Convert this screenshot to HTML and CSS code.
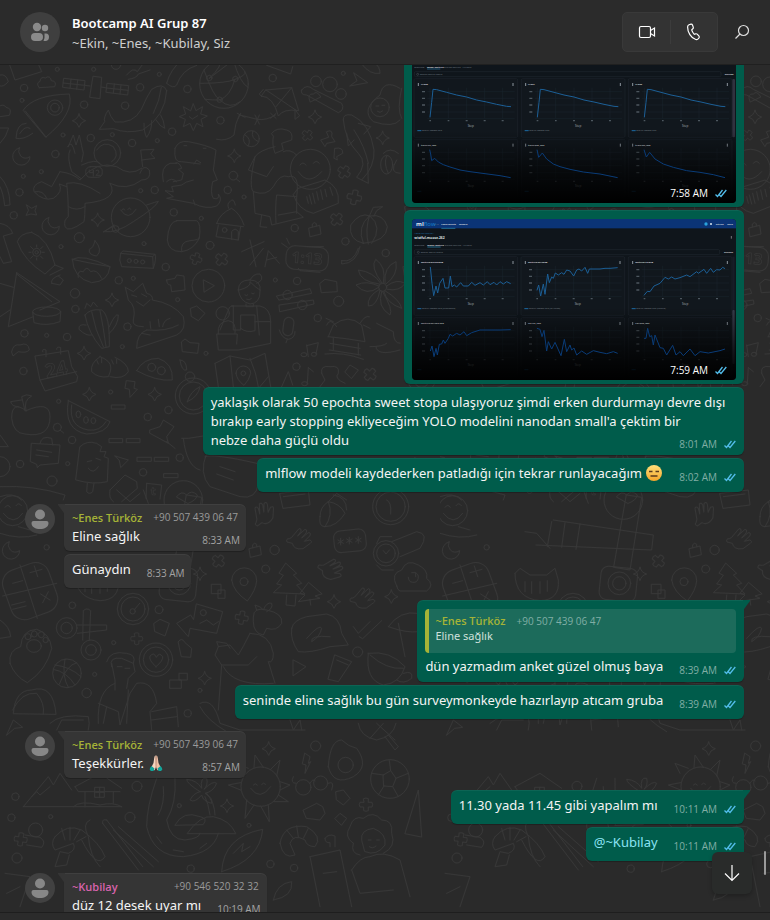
FILE: index.html
```html
<!DOCTYPE html>
<html lang="tr">
<head>
<meta charset="utf-8">
<meta name="viewport" content="width=device-width, initial-scale=1">
<title>Bootcamp AI Grup 87</title>
<link rel="stylesheet" href="styles.css">
</head>
<body>
<svg class="defs" aria-hidden="true">
  <defs>
    <symbol id="ticks" viewBox="0 0 12 9"><path d="M.5 5.5 2.500 7.500 7.500 1M4.500 6 6 7.500 11.300 1" fill="none" stroke="#53bdeb" stroke-width="1.300"/></symbol>
    <symbol id="person" viewBox="0 0 30 30"><circle cx="15" cy="10.500" r="5"/><path d="M8.500 17h13q2 0 2 2c0 4-4 6-8.500 6s-8.500-2-8.500-6q0-2 2-2z"/></symbol>
    <linearGradient id="shade" x1="0" y1="0" x2="0" y2="1"><stop offset=".55" stop-color="#000" stop-opacity="0"/><stop offset=".8" stop-color="#000" stop-opacity=".6"/><stop offset="1" stop-color="#000"/></linearGradient>
    <g id="card">
      <rect x="42" y="155" width="311" height="176" rx="4" fill="#11171d" stroke="#1d242c" stroke-width="2"/>
      <path d="M90 182v92M145 182v92M200 182v92M254 182v92M308 182v92M82 194h262M82 214h262M82 234h262M82 255h262M82 275h262" stroke="#1d2730" stroke-width="1.500"/>
      <path d="M55 168v9M339 168v9" stroke="#8d969e" stroke-width="3"/>
      <path d="M66 194h9M66 214h9M66 234h9M66 255h9M88 281h5M143 281h5M197 281h6M251 281h6M305 281h6" stroke="#4d575f" stroke-width="4"/>
      <text x="203" y="299" font-size="9" fill="#aab2ba">Step</text>
      <path d="M52 311h12" stroke="#1c6ba5" stroke-width="3"/>
    </g>
    <path id="star" d="M0-20Q4-4 20 0Q4 4 0 20Q-4 4-20 0Q-4-4 0-20Z"/>
    <path id="plus" d="M-7-18Q0-22 7-18V-7H18Q22 0 18 7H7V18Q0 22-7 18V7H-18Q-22 0-18-7H-7Z"/>
    <path id="moon" d="M-8-24A26 26 0 1 0 24 2Q8 12-4 0Q-14-12-8-24Z"/>
    <path id="cloud" d="M-22 15Q-34 2-20-4Q-18-20-4-14Q10-24 14-6Q32-4 24 12Q0 14-22 15Z"/>
    <path id="tag" d="M-16-6 16-14 20 12-12 20ZM-6-9V-18Q0-26 6-19V-12"/>
    <path id="hand" d="M-30 0-8-26Q0-28-2-18L-12-4 10-24Q18-24 14-14L0 2 20-14Q30-14 24-4L8 12 24 8Q34 12 26 18L4 34Q-24 38-28 18L-44 14Q-48 4-38 4Z"/>
    <pattern id="doodles" width="1320" height="2760" patternUnits="userSpaceOnUse" patternTransform="scale(.33333) translate(0 -195)">
      <g class="ink">
        <!-- sky and travel -->
        <path d="M28 192 45 240 125 215 112 185M0 225Q18 220 25 245Q10 262 0 258M-6 320Q12 310 18 322Q38 325 28 346L0 350M0 384H26Q20 410 0 430M0 530Q30 560 30 615L14 617Q10 580 0 560"/>
        <use href="#cloud" x="140" y="248"/>
        <path d="M192 235 255 242 252 270 189 262ZM190 249 254 256M213 238 210 265M233 240 230 268M322 250 386 257 383 285 319 277ZM320 264 384 271M343 252 340 279M363 255 360 282M255 256 270 258M304 261 320 264M280 229 305 232 300 296 270 292Z"/>
        <path d="M380 225Q400 200 412 215L430 190M385 238Q410 235 415 222L450 210M500 250Q510 210 545 180M500 250Q520 268 530 255Q545 210 590 196M800 196 872 222 878 200M1085 192Q1110 225 1140 220Q1140 200 1125 190"/>
        <path d="M70 330Q100 285 208 282Q224 340 138 411ZM76 333 138 411M78 370Q50 370 48 415Q70 420 98 400M60 400Q75 375 90 385"/>
        <circle cx="165" cy="323" r="23"/><circle cx="165" cy="323" r="13"/>
        <path d="M500 272Q490 245 455 268Q440 290 424 328Q400 372 345 366Q330 350 325 330Q310 352 314 365L298 388 340 386Q380 402 428 390Q496 350 500 272ZM432 370Q432 400 440 412Q456 390 455 362M468 360Q480 380 494 385Q492 360 482 345M460 340Q480 300 484 262"/>
        <circle cx="672" cy="252" r="73"/><path d="M600 250Q680 250 705 238Q740 226 735 215M612 210Q640 290 660 300Q690 330 720 305M628 235Q670 195 660 180M628 235 700 180Q720 250 744 262M705 238Q690 290 658 300Q640 300 615 298"/><circle cx="628" cy="234" r="8"/><circle cx="706" cy="237" r="8"/><circle cx="659" cy="299" r="8"/>
        <path d="M580 312 588 332 608 320 602 342 622 348 603 358 609 380 590 370 580 392 570 370 550 380 556 358 538 350 557 342 550 320 571 332ZM568 350 577 357 593 347"/>
        <path d="M798 270 875 263 896 332Q850 325 835 348Q820 290 785 288ZM798 270 890 332M875 263 828 320M885 330V358L898 348ZM785 290 778 282 790 268M826 345Q800 362 772 358Q740 350 718 345Q705 370 702 405Q680 425 650 418M765 345 778 372M778 345 765 374M812 340 828 355M812 355 828 340M712 340 735 352M715 355 722 340"/>
        <path d="M905 270Q920 250 940 268L1025 310Q1035 330 1015 338L920 285Q900 285 905 270ZM930 305Q920 280 940 282Q950 270 962 290Z"/><circle cx="948" cy="244" r="16"/><circle cx="990" cy="253" r="22"/><circle cx="1023" cy="282" r="16"/>
        <path d="M1062 219 1103 248 1049 258 1070 243ZM1200 265Q1150 235 1140 285Q1080 330 1120 365Q1180 385 1200 360M1205 265Q1190 330 1205 355"/><circle cx="1140" cy="322" r="28"/><path d="M1128 318h8M1146 316h8M1132 334q8 7 16-1"/>
        <path d="M1030 360Q1028 340 1055 345Q1110 370 1122 450Q1125 500 1085 540L1105 550 1103 490M1030 360Q1035 420 1075 460Q1105 490 1070 532L1085 540M1075 370 1112 380 1092 402M1040 400 1045 438 1062 420M1062 390Q1095 440 1105 490"/>
        <use href="#moon" x="66" y="468"/><use href="#moon" x="154" y="677"/>
        <!-- astronaut -->
        <circle cx="322" cy="459" r="40"/><path d="M290 450Q310 420 340 440Q360 470 335 485M205 440 220 405 228 435 238 405Q245 440 250 460L245 485M210 450Q200 470 215 515L242 535M245 495Q290 475 300 490M203 440Q215 415 225 460M180 515Q220 520 240 540Q290 480 350 500Q390 530 425 505M180 515 155 560 125 545Q95 555 102 575Q130 605 160 595Q190 575 178 552L200 560M330 550Q380 575 425 540Q455 540 448 510Q430 490 420 520M330 550Q360 600 255 610Q255 650 252 665Q205 700 195 680Q190 660 205 650Q205 590 200 550Q240 540 300 580M205 620Q230 635 255 620M105 575Q130 570 140 595M428 500 422 450 462 448 452 462 465 475 425 480"/><rect x="257" y="500" width="50" height="32" rx="14"/><path d="M268 510v8h12v-8v18M288 512q10-6 8 6l-8 8h12"/>
        <!-- dinosaur -->
        <path d="M525 445Q535 420 565 425Q620 435 648 450L640 510 652 540 638 545Q630 580 640 595Q660 600 655 582Q670 600 650 618Q620 630 580 610L500 595 520 590 495 572 520 575 515 560 545 555Q555 545 580 540M525 445Q520 490 545 485L600 492M582 492 590 480 602 488M528 488Q540 488 545 505L535 508 550 520 545 540 520 545M490 545Q480 500 510 490L530 490M500 545Q515 530 530 545M585 615 580 600M610 445h8M552 437h8"/>
        <!-- friends -->
        <path d="M815 400Q830 380 860 390Q880 395 875 420L845 430 850 450 825 460Q815 430 820 410ZM825 440Q780 450 765 470L745 510 800 530 820 500M765 470Q745 560 760 575Q800 590 820 560Q840 520 865 530Q900 520 890 590L830 585Q825 620 828 670M760 575 765 640 810 650 815 675 910 652 890 635 835 645M785 645 780 680 800 682M890 590V640M890 465Q870 445 850 455"/>
        <circle cx="931" cy="508" r="60"/><path d="M900 495q8-12 18 0M940 490q8-12 18 0M895 515Q925 560 965 515M895 565 975 540Q1020 560 1015 610L940 640Q895 630 880 585ZM920 590 925 610M928 585 935 612M938 580 945 610M950 575 955 600M962 570 968 598M975 568 980 590M990 562 998 586"/>
        <circle cx="754" cy="416" r="24"/><path d="M735 405Q755 415 745 438M758 394Q752 415 775 425"/>
        <circle cx="392" cy="652" r="58"/><path d="M366 630q4-8 8 0M384 628q4-8 8 0M362 630Q385 665 408 628M342 678Q300 700 312 695Q350 700 400 665Q470 620 475 604Q470 605 440 615M320 690 342 675"/><circle cx="347" cy="687" r="10"/>
        <path d="M80 615 95 625 110 617 105 632 110 645 93 642 78 646 85 632ZM650 670Q660 640 695 625Q720 640 732 675M650 670 730 680M655 675 648 710 715 720 722 680M686 625Q680 610 690 605Q700 590 706 615M695 718V695Q705 680 715 695V720"/><circle cx="674" cy="690" r="7"/>
        <path d="M530 662H590Q604 670 598 715Q580 750 545 755Q505 755 502 720Q505 665 530 662ZM545 754Q540 725 570 722Q600 720 598 712"/>
        <path d="M1090 730Q1045 720 1052 675Q1080 635 1110 648Q1150 640 1162 680Q1160 725 1090 730ZM1108 648Q1070 680 1090 730M1108 648Q1095 690 1105 732M1110 648Q1150 680 1115 730M1108 648 1120 622 1148 620 1130 632 1122 648"/>
        <ellipse cx="1160" cy="494" rx="18" ry="28"/><path d="M1160 468Q1150 490 1165 520M1195 460Q1170 440 1150 460M1190 480Q1165 520 1200 520M980 395Q1000 385 995 410L1005 425 980 430 975 440 962 420 985 412ZM1005 445Q1030 440 1028 460L1010 470 1012 480 1003 475Z"/>
        <use href="#plus" transform="translate(922 406) rotate(40) scale(.85)"/><use href="#plus" transform="translate(1032 516) rotate(35)"/><use href="#plus" transform="translate(1010 658) rotate(40)"/><use href="#plus" transform="translate(1063 592) rotate(12) scale(1.100)"/>
        <use href="#star" x="237" y="362"/><use href="#star" x="945" y="351"/><use href="#star" x="1148" y="414"/><use href="#star" x="703" y="468"/><use href="#star" x="293" y="660"/><use href="#tag" x="943" y="690"/>
        <g><circle cx="700" cy="527" r="13"/><path d="m709 537 10 8"/></g>
      </g>
      <!-- food, pets and gadgets -->
      <g class="ink" transform="translate(0 600)">
        <path d="M95 97Q145 115 165 195L135 222Q70 180 52 125Q60 100 95 97ZM165 195 190 205 150 225M0 70Q30 75 38 100L10 108 35 185 10 190 0 170"/><circle cx="110" cy="157" r="12"/><circle cx="110" cy="157" r="5"/><path d="M110 135v6M92 140l6 6M87 157h6M92 175l6-6M110 180v-6M128 175l-6-6M133 157h-6M128 140l-6 6"/>
        <path d="M217 178Q270 190 330 200Q325 245 275 248Q220 235 217 178ZM217 178Q245 160 330 200M285 122Q310 150 290 168Q265 165 268 148Q280 145 285 122M235 232Q230 210 250 215Q260 195 272 215Q290 205 305 235"/>
        <path d="M370 153 465 163Q470 175 460 205L365 200Q355 180 362 160ZM362 160 458 170 465 163M458 170 460 205"/><circle cx="388" cy="182" r="6"/><circle cx="408" cy="184" r="6"/><circle cx="428" cy="186" r="6"/>
        <circle cx="625" cy="257" r="49"/><path d="M611 240 643 257 613 276Z"/>
        <path d="M500 240 525 235 530 225 552 228 555 270 515 275 512 255Q500 255 500 240ZM545 425 555 417 570 428 597 430 593 460 548 455ZM572 325 590 318 615 340 595 362 575 350ZM960 250 975 238 1010 245 1012 275 965 278ZM35 455Q40 430 60 435Q85 425 88 450Q80 460 55 455L40 467Z"/>
        <path d="M715 270Q715 240 748 240Q785 240 780 275Q780 310 750 312Q720 305 715 270ZM750 240Q760 220 780 222Q795 240 770 250M718 270Q755 260 750 245Q770 265 780 270M735 285q5 4 8 0M755 280q5 4 8 0M740 298q8 4 14-2M738 312V320H760V312M700 318Q690 315 685 330L660 390M695 318H780Q812 325 812 365V430L715 450H655L650 402H712L710 432M700 318V390H722V345H765V392Q740 400 722 385M770 318 778 405M765 365H812"/><circle cx="668" cy="340" r="20"/><path d="M655 402Q650 365 685 362Q710 365 705 400"/>
        <path d="M725 155 792 125M750 120 768 200M790 145 750 195M795 200 805 152 838 190M800 180 830 172"/>
        <rect x="858" y="140" width="127" height="70" rx="26" transform="rotate(4 920 175)"/><path d="M845 130 862 142M860 115 868 132M895 205 900 212 960 217M915 140 970 140"/>
        <text x="875" y="191" font-size="46" transform="rotate(4 920 175)">1:13</text>
        <circle cx="1148" cy="262" r="12"/><path d="M1145 248Q1110 200 1127 178Q1160 200 1150 248M1155 250Q1150 200 1188 185Q1195 225 1158 252M1160 258Q1190 235 1215 250Q1200 275 1162 268M1155 272Q1200 300 1205 325Q1160 310 1152 275M1148 275Q1180 330 1170 345Q1130 320 1145 275M1140 272Q1130 320 1105 318Q1100 290 1138 268M1136 262Q1100 290 1068 255Q1100 240 1136 258M1138 252Q1080 245 1075 210Q1120 215 1142 250"/>
        <path d="M50 218 180 305 120 330M50 218 25 380 100 350M50 222 155 305M0 250 40 262M0 350 30 330"/><ellipse cx="140" cy="335" rx="42" ry="14"/><path d="M98 337 102 368Q140 380 180 365L182 337M155 250Q150 235 180 225 M155 250 180 255 190 240 175 228"/>
        <path d="M255 345Q270 325 305 330Q330 345 328 440L305 445Q265 400 255 345ZM275 335Q285 390 310 440M300 332Q310 380 318 440M255 325 260 310 272 320 280 306 292 320M258 375Q235 370 237 388Q260 410 275 405M328 380Q345 340 355 345Q355 375 328 400"/>
        <path d="M376 262 400 275 428 250 440 280Q460 285 457 300Q520 310 550 350Q560 390 530 405L410 445Q410 400 440 390M376 262 385 300Q410 320 400 360 395 380 430 380M450 300 430 318 410 305M440 390Q500 395 535 375M450 365 452 385M475 358 478 380M488 380Q490 360 510 355M395 285 410 290M425 282 440 290M425 400 450 405"/>
        <path d="M830 288 930 266 935 280 838 300ZM838 315 940 300 942 312 840 335Z"/><circle cx="863" cy="285" r="14"/><circle cx="907" cy="315" r="14"/>
        <rect x="850" y="352" width="30" height="55" rx="15" transform="rotate(8 865 380)"/><path d="M838 390Q845 415 865 418Q885 415 885 395M862 418 858 428M920 435 925 470M920 437 955 428 948 462M925 503 922 550M925 503 940 515"/><ellipse cx="912" cy="464" rx="9" ry="6"/><ellipse cx="942" cy="463" rx="8" ry="6"/><ellipse cx="914" cy="551" rx="9" ry="6"/>
        <path d="M985 410 1000 375Q1045 340 1085 375L1095 425Q1040 415 985 410ZM990 430 1080 445M988 450 1082 465M1000 415V450M1075 430V465M980 375Q990 350 1010 380M978 355 1000 365M1080 370Q1095 345 1108 350M1090 375 1110 385M975 462Q1030 455 1090 478M1110 440Q1150 440 1160 430M1130 370 1180 395Q1180 430 1200 430M1128 440Q1130 470 1200 450"/>
        <path d="M106 468 205 452 215 500 233 530 230 545 135 573 120 540ZM120 540 230 515M128 455Q125 445 138 450V470M170 448Q170 438 182 443V462"/><text x="135" y="528" font-size="58" transform="rotate(-12 170 505)">24</text>
        <path d="M300 470Q270 490 275 515Q295 535 325 530Q340 500 325 485 315 475 300 470ZM345 472Q385 490 385 515Q370 540 330 530M290 480 295 492M305 475V488M335 480 340 492M350 478V490M410 512Q430 475 475 475Q520 490 517 540Q470 545 410 512Z"/><circle cx="455" cy="502" r="12"/><circle cx="484" cy="512" r="12"/>
        <path d="M645 490 690 468 750 480 795 460 812 560M645 490 655 560M690 468 700 560M750 475Q770 520 775 560M780 560 805 530"/><path d="M708 520A22 22 0 1 1 752 520Q748 540 732 556Q710 540 708 520Z"/><circle cx="730" cy="520" r="7"/>
        <circle cx="580" cy="588" r="54"/><circle cx="580" cy="588" r="42"/><circle cx="570" cy="530" r="14"/><path d="M562 605Q570 575 600 560Q595 590 562 605ZM540 480Q560 480 560 510Q545 515 540 480"/>
        <path d="M78 632Q35 600 35 655Q40 700 75 702Q150 715 150 650Q150 600 78 632ZM78 632Q70 600 95 588Q80 580 65 590L75 632M65 600 32 605Q35 620 55 620"/>
        <path d="M205 602 330 665Q320 700 260 702Q190 690 205 602ZM215 615Q205 680 265 690Q300 695 318 665"/><ellipse cx="235" cy="643" rx="7" ry="10"/><ellipse cx="258" cy="660" rx="7" ry="10"/><ellipse cx="280" cy="662" rx="7" ry="9"/>
        <path d="M95 730 180 735 175 790 120 795 112 803 110 793 92 785ZM110 750 155 757M108 765 145 770M120 730Q125 705 155 715L158 735M335 615h40v12h-40zM328 716h40v12h-40zM380 716h40v12h-40zM412 772h42v12h-42zM464 772h42v12h-42zM492 821h42v12h-42z"/>
        <path d="M450 690 480 680 490 660 522 680 500 710 505 730 450 700ZM500 725 525 745M345 768 385 780 362 803 358 782Z"/>
        <path d="M240 740Q260 720 290 730L305 740 300 755 318 755 312 770 325 775 322 845Q280 855 228 840ZM262 850 260 875Q268 885 278 875L282 850M262 785 275 782M288 775 302 780M265 805Q280 825 295 800"/>
        <path d="M330 870 375 825 410 845 412 865 365 905M330 870Q325 895 340 905M440 850 485 855 480 897M440 850 438 895M545 715 565 715 660 700M550 715Q560 800 600 810 M615 770Q640 760 770 790 M620 760Q595 820 630 860L720 890Q770 900 775 850M660 800 705 815M650 822 700 840"/>
        <text x="452" y="885" font-size="34">t</text>
        <path d="M380 542 405 545 402 565 412 568 390 592 388 568 376 565ZM0 860Q100 855 195 885L190 900M0 890Q40 875 65 900M845 560 865 515 878 555M965 520Q960 495 990 500Q1020 495 1015 520 1000 535 1035 550M965 520 975 540 960 560M1035 515 1050 495 1075 510 1055 535Z"/>
        <circle cx="0" cy="800" r="30"/><path d="M0 705 25 740 0 740"/><path d="M1025 182Q1060 190 1075 145 M1025 182V192Q1070 190 1080 140"/>
        <use href="#star" x="336" y="300"/><use href="#star" x="252" y="460"/><use href="#star" x="268" y="583"/><use href="#star" x="464" y="583"/><use href="#plus" transform="translate(665 178) rotate(40)"/><use href="#plus" transform="translate(1110 523) rotate(40)"/><use href="#plus" transform="translate(588 176) rotate(20) scale(.9)"/>
        <circle cx="172" cy="682" r="12"/><path d="m181 691 10 8"/>
      </g>
      <!-- right-hand edge of the tile -->
      <g class="ink" transform="translate(0 600)"><path d="M1215 20Q1280 0 1300 50V110H1230ZM1210 200 1300 185 1310 250 1220 265ZM1230 380Q1300 350 1305 420Q1270 460 1230 430Z"/><circle cx="1265" cy="540" r="40"/><circle cx="1265" cy="540" r="22"/><path d="M1220 650 1290 630 1310 700 1240 720Z"/><use href="#hand" x="1250" y="800"/></g>
      <g class="ink"><circle cx="1260" cy="300" r="44"/><path d="M1225 280Q1260 300 1300 280M1260 256V344"/><path d="M1220 450 1310 430 1300 520 1230 530Z"/><use href="#cloud" x="1265" y="230"/><use href="#star" x="1250" y="400"/></g>
      <!-- nature, games and tools -->
      <g class="ink" transform="translate(0 1470)">
        <circle cx="38" cy="62" r="45"/><path d="M15 52q8-12 16 0M48 47q8-12 16 0M10 70Q40 110 68 70M0 130Q60 150 110 135M55 110 90 120"/>
        <circle cx="550" cy="30" r="58"/><path d="M530 20Q545 0 560 15Q575-2 592 15Q590 30 565 40ZM350 0 390 35 420 10M430 0 445 40"/>
        <use href="#moon" x="35" y="180"/>
        <path d="M1190 288Q1170 250 1205 240Q1220 205 1255 225Q1285 240 1280 265Q1305 285 1280 303H1200Q1192 300 1190 288ZM1225 262A15 15 0 1 0 1245 248M1235 248h12v12"/>
        <rect x="18" y="226" width="145" height="155" rx="42" transform="rotate(-20 90 304)"/><path d="M60 225 112 385M8 318 170 280M90 248 126 238M103 228 113 260M38 280 68 272M122 312 150 330M145 305 128 338M35 345 75 335M38 358 78 348"/>
        <path d="M225 250 240 235 270 255H320L345 235 355 270Q360 330 300 332Q225 325 225 250M255 275v30M275 275v35M300 275v35M322 272v32"/><rect x="480" y="232" width="110" height="100" rx="22" transform="rotate(6 535 282)"/><circle cx="538" cy="280" r="34"/><circle cx="538" cy="280" r="20"/>
        <path d="M695 270A37 37 0 1 1 770 272Q768 300 742 333Q700 305 695 270Z"/><circle cx="732" cy="275" r="12"/><path d="M635 283h28v28h-28zM655 300h20v25h-20z"/>
        <path d="M858 220 890 250 880 255 905 280 890 285 915 312 820 308 845 285 830 282 850 256 838 250ZM860 315 858 345 885 348 888 315M925 278 900 310 915 315 895 335 960 325 945 318 965 312ZM930 328 932 345"/>
        <!-- crossword and camera row -->
        <path d="M340 90 640 135 635 180 288 165M560 15 605 22 570 240 522 232ZM255 125 290 130 330 175M335 95 322 170M375 98 365 172M420 102 408 178"/><rect x="385" y="0" width="0" height="0"/>
        <use href="#hand" transform="translate(790 65) rotate(-50)"/><use href="#hand" x="905" y="142"/><use href="#hand" transform="translate(1000 235) rotate(20)"/><use href="#hand" x="1095" y="320"/>
        <path d="M960 80Q960 50 985 35Q1000 75 975 110Q955 110 960 80ZM985 35Q1020 40 1035 70 1010 110 975 110M1000 15Q1040 20 1040 60M985 35 1010 10 1040 30M840 10 925 0 930 45 850 55ZM850 20 915 12"/>
        <circle cx="1172" cy="50" r="54"/><circle cx="1172" cy="50" r="44"/><path d="M1160 30Q1175 35 1172 72"/><circle cx="1158" cy="190" r="38"/><circle cx="1158" cy="190" r="28"/><path d="M1150 182 1158 192 1168 180M1130 160 1140 140H1175M1130 225 1145 240H1180"/>
        <rect x="1002" y="120" width="96" height="65" rx="20" transform="rotate(-6 1050 153)"/><path d="M1022 145v20M1014 150l16 10M1030 150l-16 10M1048 142v20M1040 147l16 10M1056 147l-16 10M1075 140v20M1067 145l16 10M1083 145l-16 10"/>
        <path d="M1175 155 1250 125Q1290 130 1260 175L1200 200"/>
        <circle cx="399" cy="357" r="47"/><circle cx="399" cy="357" r="36"/><circle cx="398" cy="364" r="8"/><path d="m404 358 15-18"/>
        <circle cx="200" cy="414" r="31"/><circle cx="200" cy="414" r="17"/><circle cx="273" cy="480" r="30"/><circle cx="273" cy="480" r="16"/><path d="M230 405 320 405V420L232 430M248 450 250 362Q260 352 272 362L268 450"/>
        <path d="M30 520Q25 480 62 470Q65 420 110 418Q150 430 155 475Q140 540 82 578Q45 560 30 520Z"/><ellipse cx="102" cy="468" rx="22" ry="19"/><circle cx="84" cy="440" r="9"/><circle cx="103" cy="432" r="9"/><circle cx="124" cy="434" r="9"/><circle cx="137" cy="450" r="8"/>
        <circle cx="201" cy="550" r="43"/><path d="M160 538Q200 545 225 585M165 525Q210 530 243 560M195 507Q185 560 205 592M230 518Q200 525 178 582"/>
        <circle cx="468" cy="509" r="50"/><circle cx="468" cy="509" r="38"/><path d="M468 530Q445 510 450 498Q462 485 469 502Q478 485 488 500Q490 512 468 530Z"/>
        <path d="M590 342 668 365 650 430 570 415 565 440 530 400 572 375 580 388ZM600 400 620 390 640 405 655 395"/><circle cx="610" cy="368" r="9"/>
        <path d="M510 570h34v25h-34zM538 550h24v20h-24zM462 400 480 388 508 400 495 438 465 425ZM535 455Q545 440 555 458L575 475 572 502 545 500Z"/>
        <path d="M875 415Q880 390 920 380L980 372Q1020 380 1025 430L1045 465 990 470Q930 490 895 485Q870 450 875 415ZM920 445Q960 400 965 415 960 440 935 455 930 435 990 440M1060 410 1075 430 1110 395M1078 440 1088 446 1145 392"/>
        <path d="M760 380Q760 350 800 360Q850 370 845 400Q830 425 800 415L790 435Q760 430 760 395ZM770 360 765 345Q785 350 790 360Q800 335 815 340Q820 355 800 365M750 430Q810 430 820 490Q820 520 805 515L825 580M750 430Q730 470 715 495L690 465 655 470 645 495 665 525 745 525 770 500M665 525 655 660M655 470 650 455 680 460 690 475M670 530Q700 590 820 580M600 640Q640 620 660 700L720 720H915M600 650Q620 690 680 725M870 690 880 720 900 690 905 720"/>
        <path d="M320 515Q330 480 380 490Q410 495 400 520L405 545 385 565 380 595M335 520 345 570V600M335 530Q325 500 365 505L400 520M352 530h14M375 535h14M345 580Q290 600 295 700M295 640 355 665 360 705 390 610 410 580Q460 570 470 640L450 665 455 720M320 650 310 700M385 600 380 700M455 665 530 650 535 710M455 690 530 680M150 700Q180 670 265 680Q270 700 265 720M170 720 185 690 250 690"/>
        <path d="M40 670Q45 600 95 600Q160 580 168 672ZM38 660Q65 605 110 610Q135 640 130 672"/>
        <path d="M20 735 40 690 68 712 45 715ZM0 390Q30 410 32 440L0 445"/>
        <path d="M880 510 918 530 880 557ZM1005 495 1055 515 1015 575 985 568ZM1010 510 1045 525"/>
        <path d="M1105 490Q1170 480 1215 530Q1200 580 1150 585Q1095 570 1105 490ZM1110 495Q1160 540 1210 535 M1210 550Q1240 540 1235 565Q1210 585 1190 570"/><path d="M1165 410Q1200 360 1255 370M1165 410Q1220 430 1255 425M1195 400 1215 500"/>
        <path d="M1075 700Q1080 740 1130 750Q1180 740 1188 700M1110 745 1150 700M1130 700 1185 750M1155 740 1185 780 1195 770 1165 735"/>
        <path d="M70 950 145 860 160 885 180 850 215 900M95 920 110 905 120 915 150 890M225 890 300 850 365 895M225 890 235 905 360 905M255 905V950M340 905V940M285 892h28v30h-28zM299 892v30M285 907h28M70 950H365M220 950Q240 930 300 945Q340 935 365 950"/>
        <path d="M470 865Q440 950 440 1010Q460 1100 550 1100Q640 1090 655 1030M525 865Q530 940 500 990Q510 1050 555 1050Q600 1045 600 1030M490 890Q495 940 475 975M520 1080 550 1085M470 1040 485 1060M600 1075 620 1060M525 1005Q550 960 600 980 625 985 610 1003ZM562 1030Q600 975 640 980 690 990 707 1030ZM630 975Q625 940 615 920M645 975Q645 940 620 910M600 905Q560 880 560 868 590 870 605 895 600 860 620 865 625 885 612 898 640 870 650 880 640 905 615 910 640 925 635 940 610 935 605 915 585 940 570 930 580 910 600 905Z"/>
        <circle cx="782" cy="890" r="59"/><path d="M760 885q6-8 12 0M785 883q6-8 12 0M752 895Q780 935 812 890M720 850 705 820 745 835M762 832 765 795 790 832M812 838 840 810 830 858M840 875 870 885 840 900M835 915 865 935 822 935M805 945 808 995 782 948M762 945 735 985 740 930M722 900 685 885 722 878"/>
        <path d="M985 830Q990 750 1025 750Q1045 770 1070 775Q1110 830 1060 860Q1000 890 985 830Z"/><circle cx="1037" cy="825" r="23"/><circle cx="1170" cy="867" r="58"/><path d="M1150 855 1172 842 1188 865 1178 890 1152 888ZM1172 842 1168 812M1188 865 1225 850M1178 890 1195 920M1152 888 1135 915M1150 855 1115 850"/>
        <circle cx="910" cy="892" r="23"/><circle cx="962" cy="879" r="21"/><path d="M930 880Q938 865 945 872M888 880Q870 880 880 860M985 880Q1005 870 995 900M915 790 930 800 925 820 932 815 915 850 918 825 908 822ZM910 960 950 940 968 950 975 970 960 990 920 985ZM1005 985 1020 970 1040 985 1025 1005ZM1008 905 1030 900 1050 925 1030 945 1010 930Z"/>
        <path d="M165 1040Q200 1000 245 1020Q300 1060 315 1100 290 1140 245 1050M165 1040Q150 1060 165 1080L220 1060Q230 1080 205 1090L180 1085 165 1130 200 1125 208 1095M185 1015 195 1050M210 1012V1050M240 1020 222 1050M258 1040 230 1055M308 1000 415 1140M320 990 428 1130M340 1020 460 1130M355 1010 475 1115M308 1000Q305 985 320 990M270 990Q245 1000 265 1040Q270 1100 300 1130"/>
        <path d="M665 1145Q670 1040 788 1018Q780 1110 665 1145ZM700 1090 730 1060 725 1085 750 1070M840 1060Q850 1000 920 1010Q970 1040 945 1070Q920 1070 915 1050Q880 1030 870 1060L885 1095Q850 1110 840 1060ZM860 1020 880 1045M890 1008 895 1040M925 1015 910 1045M975 1045Q985 1030 1005 1038V1070M975 1045Q975 1060 990 1058V1070"/>
        <path d="M1060 1060Q1030 1040 1050 1010Q1060 975 1090 985Q1120 960 1145 990Q1180 990 1175 1030Q1190 1070 1150 1090M1060 1060Q1050 1090 1080 1095M1085 1050Q1080 1020 1120 1015Q1160 1030 1155 1065Q1130 1100 1095 1085ZM1105 1050h8M1130 1050h8M1108 1070q10 8 20-2M1055 1140Q1080 1100 1110 1100Q1150 1080 1200 1110L1230 1220M930 1100 1020 1080 1055 1250M930 1100 960 1250M970 1150 1010 1145M1055 1140 1080 1210 1180 1200"/>
        <path d="M1215 1030 1255 900 1265 1040Z"/><circle cx="107" cy="1020" r="21"/><path d="M75 1035 120 1042Q140 1055 125 1072L80 1065M15 1150 90 1160 60 1250M20 1210 60 1190M820 1230Q830 1180 875 1175Q880 1220 820 1230"/>
        <use href="#plus" transform="translate(62 1048) rotate(8)"/><use href="#plus" transform="translate(655 213) rotate(40)"/><use href="#plus" transform="translate(410 446) scale(.9)"/><use href="#plus" transform="translate(725 383) rotate(10)"/><use href="#plus" x="1098" y="944"/>
        <use href="#star" x="600" y="252"/><use href="#star" x="614" y="565"/><use href="#star" x="681" y="948"/><use href="#star" x="806" y="776"/><use href="#star" x="1002" y="335"/><use href="#star" x="1174" y="320"/><use href="#tag" x="764" y="182"/>
      </g>
      <!-- scattered bubbles -->
      <g class="ink">
        <circle cx="172" cy="208" r="6"/><circle cx="281" cy="208" r="6"/><circle cx="348" cy="194" r="14"/><circle cx="72" cy="264" r="11"/><circle cx="420" cy="262" r="11"/><circle cx="478" cy="223" r="6"/><circle cx="562" cy="267" r="11"/><circle cx="818" cy="234" r="11"/><circle cx="1030" cy="220" r="6"/><circle cx="252" cy="314" r="11"/><circle cx="375" cy="317" r="11"/><circle cx="66" cy="301" r="6"/><circle cx="661" cy="361" r="11"/><circle cx="516" cy="395" r="11"/><circle cx="272" cy="414" r="11"/><circle cx="396" cy="429" r="11"/><circle cx="166" cy="462" r="11"/><circle cx="70" cy="529" r="6"/><circle cx="58" cy="577" r="11"/><circle cx="464" cy="570" r="11"/><circle cx="683" cy="570" r="11"/><circle cx="41" cy="646" r="11"/><circle cx="521" cy="637" r="11"/><circle cx="884" cy="684" r="11"/><circle cx="238" cy="713" r="15"/><circle cx="630" cy="736" r="12"/><circle cx="1036" cy="724" r="11"/><circle cx="1157" cy="759" r="11"/><circle cx="497" cy="801" r="11"/><circle cx="891" cy="843" r="11"/><circle cx="225" cy="880" r="14"/><circle cx="356" cy="841" r="11"/><circle cx="1016" cy="904" r="15"/><circle cx="226" cy="927" r="11"/><circle cx="953" cy="954" r="11"/><circle cx="73" cy="1000" r="11"/><circle cx="201" cy="1011" r="11"/><circle cx="382" cy="980" r="11"/><circle cx="70" cy="1113" r="11"/><circle cx="889" cy="1100" r="11"/><circle cx="443" cy="1251" r="11"/><circle cx="505" cy="1230" r="11"/><circle cx="216" cy="1320" r="11"/><circle cx="60" cy="1392" r="11"/><circle cx="539" cy="1373" r="11"/><circle cx="156" cy="1443" r="15"/><circle cx="429" cy="1417" r="11"/>
        <circle cx="140" cy="1642" r="8"/><circle cx="824" cy="1650" r="14"/><circle cx="797" cy="1707" r="12"/><circle cx="217" cy="1816" r="10"/><circle cx="477" cy="1829" r="12"/><circle cx="1073" cy="1956" r="15"/><circle cx="260" cy="2079" r="14"/><circle cx="563" cy="2140" r="11"/><circle cx="947" cy="2238" r="15"/><circle cx="411" cy="2359" r="15"/><circle cx="390" cy="2452" r="15"/><circle cx="34" cy="2453" r="11"/><circle cx="51" cy="2574" r="15"/><circle cx="811" cy="2592" r="11"/><circle cx="572" cy="2606" r="11"/><circle cx="882" cy="2604" r="11"/><circle cx="46" cy="2390" r="11"/>
        <circle cx="189" cy="405" r="6"/><circle cx="337" cy="404" r="6"/><circle cx="472" cy="422" r="6"/><circle cx="124" cy="515" r="6"/><circle cx="422" cy="572" r="6"/><circle cx="732" cy="591" r="6"/><circle cx="604" cy="655" r="6"/><circle cx="183" cy="740" r="6"/><circle cx="432" cy="731" r="6"/><circle cx="400" cy="835" r="6"/><circle cx="533" cy="899" r="6"/><circle cx="826" cy="840" r="6"/><circle cx="367" cy="1040" r="6"/><circle cx="618" cy="1060" r="6"/><circle cx="140" cy="1006" r="6"/><circle cx="332" cy="1176" r="6"/><circle cx="176" cy="1204" r="6"/><circle cx="203" cy="1391" r="6"/><circle cx="341" cy="1928" r="6"/><circle cx="284" cy="2023" r="6"/><circle cx="600" cy="2071" r="6"/><circle cx="538" cy="2417" r="6"/><circle cx="747" cy="2476" r="6"/><circle cx="152" cy="2450" r="6"/>
      </g>
    </pattern>
  </defs>
</svg>

<header class="topbar">
  <span class="group-avatar">
    <svg viewBox="0 0 40 40" aria-hidden="true"><circle cx="17" cy="15" r="4.200"/><circle cx="25" cy="16" r="3.200"/><rect x="11" y="21" width="12" height="8" rx="4"/><path d="M24.500 21.500H26q3 0 3 3.500t-3 4h-2.500q1.500-3 1-7.500z"/></svg>
  </span>
  <div class="group-info">
    <h1>Bootcamp AI Grup 87</h1>
    <p>~Ekin, ~Enes, ~Kubilay, Siz</p>
  </div>
  <div class="calls">
    <button type="button" aria-label="Görüntülü arama"><svg viewBox="0 0 18 18" aria-hidden="true"><rect x="1.500" y="3.500" width="11" height="11" rx="1.500"/><path d="M12.500 7.500 16.500 5v8l-4-2.500"/></svg></button>
    <button type="button" aria-label="Sesli arama"><svg viewBox="0 0 18 18" aria-hidden="true"><path d="M4 1.800 6 1.200Q7 1 7.500 2L8.300 4.300Q8.500 5.200 7.800 5.800L6.700 6.900Q7.300 9.300 9.300 11.300L10.800 10.800Q11.600 10.600 12.200 11.200L14 13.200Q14.600 14 14 14.800L12.800 16.100Q12 16.800 10.800 16.500C6 15.200 2.500 9 2.600 4Q2.700 2.300 4 1.800Z"/></svg></button>
  </div>
  <button type="button" class="search" aria-label="Ara"><svg viewBox="0 0 18 18" aria-hidden="true"><circle cx="10.500" cy="7.500" r="5"/><path d="M7 11 2.500 15.500"/></svg></button>
</header>

<main class="chat">
  <svg class="wallpaper" aria-hidden="true"><rect width="100%" height="100%" fill="url(#doodles)"/></svg>
  <ol class="messages">
    <li class="msg out">
      <div class="bubble photo">
        <svg class="shot" viewBox="36 -51 972 483" role="img" aria-label="MLflow öğrenme oranı grafikleri">
          <rect x="36" y="-51" width="972" height="483" fill="#0f151b"/>
          <g class="tiny"><text x="43" y="27">Overview</text><text x="81" y="27" class="strong">Model metrics</text><text x="132" y="27">System metrics</text><text x="187" y="27">Artifacts</text><text x="60" y="49">Search metric charts</text><text x="974" y="49" class="strong">Refresh</text></g>
          <path d="M81 30h40" stroke="#2374a8" stroke-width="2"/><rect x="43" y="38" width="920" height="15" rx="4" fill="none" stroke="#20272e" stroke-width="2"/><circle cx="53" cy="46" r="3" fill="none" stroke="#6c757d"/>
          <use href="#card" y="-96"/><use href="#card" x="322" y="-96"/><use href="#card" x="643" y="-96"/>
          <use href="#card" y="86"/><use href="#card" x="322" y="86"/><use href="#card" x="643" y="86"/>
          <g class="tiny"><text x="63" y="79" class="strong">lr/pg0</text><text x="384" y="79" class="strong">lr/pg1</text><text x="706" y="79" class="strong">lr/pg2</text><text x="63" y="261" class="strong">train/cls_loss</text><text x="384" y="261" class="strong">train/box_loss</text><text x="706" y="261" class="strong">train/dfl_loss</text><text x="66" y="216">wistful-moose-262</text><text x="388" y="216">wistful-moose-262</text><text x="709" y="216">wistful-moose-262</text></g>
          <rect x="997" y="60" width="8" height="175" rx="3" fill="#30323f"/>
          <rect x="36" y="-51" width="972" height="483" fill="url(#shade)"/>
          <g class="line"><path id="rate" d="M90 175 95 130 99 91 110 92 140 100 170 108 200 114 230 123 260 129 290 136 320 142 333 143"/><use href="#rate" x="322"/><use href="#rate" x="643"/></g>
          <path class="line low" d="M89 272 92 285 95 305 104 298 115 309 130 317 150 324 180 333 210 338 240 342 270 346 300 350 332 356M411 272 416 295 427 282 440 300 460 315 480 323 510 331 550 339 600 345 653 356M732 272 739 294 749 280 765 300 790 315 820 325 860 335 900 340 940 347 975 356"/>
        </svg>
        <span class="stamp"><time>7:58 AM</time><svg class="ticks" role="img" aria-label="Okundu"><use href="#ticks"/></svg></span>
      </div>
    </li>
    <li class="msg out">
      <div class="bubble photo">
        <svg class="shot" viewBox="36 42 972 483" role="img" aria-label="MLflow doğruluk grafikleri">
          <rect x="36" y="42" width="972" height="483" fill="#0f151b"/>
          <rect x="36" y="42" width="972" height="28" fill="#0b3476"/>
          <text x="48" y="63" font-size="18" font-weight="700" fill="#dce8f2">ml<tspan fill="#1685d0" font-weight="400">flow</tspan></text>
          <g class="tiny"><text x="102" y="61">2.15</text><text x="124" y="61" class="strong">Experiments</text><text x="177" y="61" class="strong">Models</text><text x="947" y="61" class="strong">GitHub</text><text x="982" y="61" class="strong">Docs</text><text x="43" y="86" class="crumb">YOLO-v8-training ›</text><text x="43" y="123">Overview</text><text x="82" y="123" class="strong">Model metrics</text><text x="134" y="123">System metrics</text><text x="188" y="123">Artifacts</text><text x="62" y="145">Search metric charts</text><text x="972" y="145" class="strong">Refresh</text></g>
          <text x="43" y="101" font-size="10" font-weight="700" fill="#dfe3e6">wistful-moose-262</text>
          <path d="M124 70h42M82 126h40" stroke="#2a91c0" stroke-width="2"/><circle cx="918" cy="57" r="5" fill="#2aa3dd"/><circle cx="933" cy="57" r="3" fill="#dce8f2"/><path d="M994 93v8" stroke="#aaa" stroke-width="2"/>
          <rect x="43" y="134" width="916" height="15" rx="4" fill="none" stroke="#20272e" stroke-width="2"/><circle cx="55" cy="142" r="3" fill="none" stroke="#6c757d"/>
          <use href="#card"/><use href="#card" x="321"/><use href="#card" x="643"/>
          <use href="#card" y="183"/><use href="#card" x="321" y="183"/><use href="#card" x="643" y="183"/>
          <g class="tiny"><text x="63" y="175" class="strong">metrics/precisionB</text><text x="384" y="175" class="strong">metrics/mAP50B</text><text x="706" y="175" class="strong">metrics/recallB</text><text x="63" y="358" class="strong">metrics/mAP50-95B</text><text x="384" y="358" class="strong">val/cls_loss</text><text x="706" y="358" class="strong">val/box_loss</text><text x="66" y="313">wistful-moose-262 (precisionB)</text><text x="387" y="313">wistful-moose-262 (mAP50B)</text><text x="709" y="313">wistful-moose-262 (recallB)</text></g>
          <rect x="997" y="155" width="7" height="310" fill="#171d27"/><rect x="997" y="315" width="7" height="162" rx="3" fill="#363b49"/>
          <rect x="36" y="42" width="972" height="483" fill="url(#shade)"/>
          <path class="line" d="M91 186 96 235 101 272 108 243 113 264 119 235 129 220 135 249 146 249 151 213 156 245 163 240 170 246 182 233 190 243 205 243 215 232 225 241 240 233 250 240 262 230 270 239 282 232 290 240 300 230 310 237 320 230 332 236M411 256 416 240 422 273 430 237 435 268 443 207 448 233 455 216 460 220 466 204 475 210 485 203 492 208 500 195 510 198 521 213 530 195 537 192 545 198 555 187 563 205 568 192 600 192 615 190 630 190 653 188M732 271 742 259 750 260 762 243 780 235 795 217 805 222 815 216 825 222 840 218 860 210 870 215 890 200 895 205 912 193 920 205 932 190 940 202 950 194 960 195 968 187 975 191"/>
          <path class="line low" d="M91 438 96 423 102 455 108 430 112 450 118 418 125 417 130 405 135 415 145 400 150 388 158 393 170 385 180 390 192 380 200 392 215 383 240 375 270 375 300 375 332 374M411 370 420 373 426 395 432 376 440 438 445 410 455 432 465 412 483 452 493 403 500 440 510 420 515 435 522 429 530 450 545 438 560 448 580 437 600 442 620 446 640 440 653 445M732 400 738 400 743 370 749 395 755 392 760 420 765 390 780 428 790 430 800 450 818 421 828 450 840 440 850 452 870 432 885 452 900 440 925 444 960 437 975 432"/>
        </svg>
        <span class="stamp"><time>7:59 AM</time><svg class="ticks" role="img" aria-label="Okundu"><use href="#ticks"/></svg></span>
      </div>
    </li>
    <li class="msg out">
      <div class="bubble">
        <div class="line-row long"><p>yaklaşık olarak 50 epochta sweet stopa ulaşıyoruz şimdi erken durdurmayı devre dışı<br>bırakıp early stopping ekliyeceğim YOLO modelini nanodan small'a çektim bir<br>nebze daha güçlü oldu</p><span class="meta"><time>8:01 AM</time><svg class="ticks" role="img" aria-label="Okundu"><use href="#ticks"/></svg></span></div>
      </div>
    </li>
    <li class="msg out">
      <div class="bubble single">
        <div class="line-row"><p>mlflow modeli kaydederken patladığı için tekrar runlayacağım <svg class="emoji" viewBox="0 0 18 18" role="img" aria-label="😑"><defs><linearGradient id="face" x1="0" y1="0" x2="0" y2="1"><stop offset="0" stop-color="#ffe07a"/><stop offset="1" stop-color="#f5a52a"/></linearGradient></defs><circle cx="9" cy="9" r="8" fill="url(#face)"/><path d="M4 7.500h3.500M10.500 7.500H14M5.500 12h7" stroke="#5a3b1c" stroke-width="1.300"/></svg></p><span class="meta"><time>8:02 AM</time><svg class="ticks" role="img" aria-label="Okundu"><use href="#ticks"/></svg></span></div>
      </div>
    </li>
    <li class="msg in first">
      <span class="avatar"><svg viewBox="0 0 30 30" aria-hidden="true"><use href="#person"/></svg></span>
      <div class="bubble tail">
        <div class="sender"><strong>~Enes Türköz</strong><span>+90 507 439 06 47</span></div>
        <div class="line-row"><p>Eline sağlık</p><span class="meta"><time>8:33 AM</time></span></div>
      </div>
    </li>
    <li class="msg in">
      <div class="bubble single">
        <div class="line-row"><p>Günaydın</p><span class="meta"><time>8:33 AM</time></span></div>
      </div>
    </li>
    <li class="msg out first">
      <div class="bubble tail quoted">
        <blockquote><div class="sender"><strong>~Enes Türköz</strong><span>+90 507 439 06 47</span></div><p>Eline sağlık</p></blockquote>
        <div class="line-row"><p>dün yazmadım anket güzel olmuş baya</p><span class="meta"><time>8:39 AM</time><svg class="ticks" role="img" aria-label="Okundu"><use href="#ticks"/></svg></span></div>
      </div>
    </li>
    <li class="msg out">
      <div class="bubble single">
        <div class="line-row"><p>seninde eline sağlık bu gün surveymonkeyde hazırlayıp atıcam gruba</p><span class="meta"><time>8:39 AM</time><svg class="ticks" role="img" aria-label="Okundu"><use href="#ticks"/></svg></span></div>
      </div>
    </li>
    <li class="msg in first">
      <span class="avatar"><svg viewBox="0 0 30 30" aria-hidden="true"><use href="#person"/></svg></span>
      <div class="bubble tail">
        <div class="sender"><strong>~Enes Türköz</strong><span>+90 507 439 06 47</span></div>
        <div class="line-row"><p>Teşekkürler. <svg class="emoji" viewBox="0 0 18 18" role="img" aria-label="🙏🏻"><path d="M8.800 1.500Q7.500 1 7.200 4L6.500 9 4.500 13l3 3.500L9 13z" fill="#f6d3bd"/><path d="M9.200 1.500Q10.500 1 10.800 4l.7 5 2 4-3 3.500L9 13z" fill="#eebfa5"/><path d="M9 2v12" stroke="#b9826b" stroke-width=".7"/><path d="m4.500 12 3 2.500-1 2.500H4q-2-1-1-3zM13.500 12l-3 2.500 1 2.500H14q2-1 1-3z" fill="#12a59a"/></svg></p><span class="meta"><time>8:57 AM</time></span></div>
      </div>
    </li>
    <li class="msg out first">
      <div class="bubble single tail">
        <div class="line-row"><p>11.30 yada 11.45 gibi yapalım mı</p><span class="meta"><time>10:11 AM</time><svg class="ticks" role="img" aria-label="Okundu"><use href="#ticks"/></svg></span></div>
      </div>
    </li>
    <li class="msg out">
      <div class="bubble single">
        <div class="line-row"><p><a href="#kubilay">@~Kubilay</a></p><span class="meta"><time>10:11 AM</time><svg class="ticks" role="img" aria-label="Okundu"><use href="#ticks"/></svg></span></div>
      </div>
    </li>
    <li class="msg in first" id="kubilay">
      <span class="avatar"><svg viewBox="0 0 30 30" aria-hidden="true"><use href="#person"/></svg></span>
      <div class="bubble tail">
        <div class="sender pink"><strong>~Kubilay</strong><span>+90 546 520 32 32</span></div>
        <div class="line-row"><p>düz 12 desek uyar mı</p><span class="meta"><time>10:19 AM</time></span></div>
      </div>
    </li>
  </ol>
  <span class="thumb"></span>
  <button type="button" class="to-end" aria-label="En alta in"><svg viewBox="0 0 20 20" aria-hidden="true"><path d="M10 2v15.500M3 10.500l7 7 7-7"/></svg></button>
</main>
<footer class="bottom"></footer>
</body>
</html>
```
FILE: styles.css
```css
* { box-sizing: border-box; }

body {
  margin: 0;
  height: 100vh;
  display: flex;
  flex-direction: column;
  overflow: hidden;
  background: #2b2b2b;
  color: #f4f4f4;
  font: 13px/19px "Noto Sans", "Open Sans", sans-serif;
}

h1, p, ol, blockquote { margin: 0; padding: 0; }
ol { list-style: none; }
a { color: #8be3f3; text-decoration: none; }
button { border: 0; padding: 0; background: none; color: inherit; font: inherit; }
.defs { position: absolute; width: 0; height: 0; }

/* Header */
.topbar {
  flex: none;
  display: flex;
  align-items: center;
  height: 65px;
  padding: 0 4px 1px 20px;
  border-bottom: 1px solid #202020;
}
.group-avatar {
  width: 40px;
  height: 40px;
  margin-right: 12px;
  border-radius: 50%;
  background: #3f3f3f;
}
.group-avatar svg { display: block; fill: #8a8a8a; }
.group-info { flex: 1; padding-top: 2px; line-height: 20px; }
.group-info h1 { font-size: 13px; line-height: 20px; font-weight: 600; color: #fff; }
.group-info p { color: #cfcfcf; }
.calls {
  display: flex;
  height: 40px;
  border: 1px solid #393939;
  border-radius: 5px;
  background: #333;
}
.calls button { display: grid; place-items: center; width: 47px; }
.calls button + button { position: relative; }
.calls button + button::before {
  content: "";
  position: absolute;
  left: 0;
  top: 7px;
  bottom: 7px;
  width: 1px;
  background: #3c3c3c;
}
.topbar button svg { width: 18px; height: 18px; fill: none; stroke: #fff; stroke-width: 1.2; }
.search { display: grid; place-items: center; width: 48px; height: 40px; }
.topbar .search svg { stroke: #dedede; }

/* Chat */
.chat { position: relative; flex: 1; min-height: 0; overflow: hidden; background: #2a2a2a; }
.wallpaper { position: absolute; top: 0; left: 0; width: 100%; height: 100%; }
.ink { fill: none; stroke: #373737; stroke-width: 3; stroke-linejoin: round; stroke-linecap: round; }
.ink text { font-family: "Open Sans", sans-serif; font-weight: 700; stroke-width: 2; }

.messages {
  position: relative;
  display: flex;
  flex-direction: column;
  gap: 3px;
  margin-top: -32px;
  padding: 0 26px 0 25px;
}
.msg { display: flex; }
.msg.first { margin-top: 9px; }
.out { justify-content: flex-end; }
.in { padding-left: 39px; }
.in.first { padding-left: 0; }
.avatar { flex: none; width: 30px; height: 30px; margin-right: 9px; border-radius: 50%; background: #414141; }
.avatar svg { display: block; fill: #878787; }

.bubble {
  position: relative;
  padding: 6px 8px 5px;
  border-radius: 6px;
  box-shadow: 0 1px 1px rgba(0, 0, 0, .25), inset 0 1px rgba(255, 255, 255, .05);
}
.out .bubble { background: #005c4b; }
.in .bubble { padding: 4px 6px 5px 8px; background: #353535; }
.bubble.single, .in .bubble.single { padding-top: 6px; padding-bottom: 9px; }
.tail::before {
  content: "";
  position: absolute;
  top: 0;
  width: 7px;
  height: 9px;
}
.out .tail { border-top-right-radius: 0; }
.out .tail::before { right: -6px; background: #005c4b; clip-path: polygon(0 0, 100% 0, 100% 10%, 15% 100%, 0 100%); }
.in .tail { border-top-left-radius: 0; }
.in .tail::before { left: -6px; background: #353535; clip-path: polygon(0 0, 100% 0, 100% 100%, 85% 100%, 0 10%); }

.line-row { display: flex; justify-content: space-between; align-items: flex-end; gap: 16px; }
.line-row.long p { margin-right: -62px; }
.meta {
  display: flex;
  align-items: center;
  gap: 7px;
  flex: none;
  font-family: "Open Sans", sans-serif;
  font-size: 10px;
  line-height: 11px;
  color: #a3a3a3;
}
.out .meta { color: #80aea5; }
.ticks { width: 12px; height: 9px; }
.emoji { width: 18px; height: 18px; vertical-align: -4px; }

.sender {
  display: flex;
  justify-content: space-between;
  gap: 11px;
  padding-right: 2px;
  font-family: "Open Sans", sans-serif;
  font-size: 10px;
  line-height: 19px;
  color: #9a9a9a;
}
.sender strong { color: #a5b337; font-size: 11px; font-weight: 600; }
.sender.pink strong { color: #d863ad; }

.quoted { padding: 9px 8px 6px; }
blockquote {
  height: 44px;
  margin-bottom: 4px;
  padding: 4px 6px;
  border-left: 4px solid #a5b337;
  border-radius: 4px;
  background: #1c6b5b;
  font-size: 11px;
  line-height: 14px;
  color: #cfe0dc;
}
blockquote .sender { justify-content: flex-start; line-height: 16px; color: #80aea5; }
blockquote p { line-height: 14px; }

.bubble.photo { width: 340px; padding: 9px 8px 4px; }
.shot { display: block; width: 100%; border-radius: 4px; font-family: "Open Sans", sans-serif; }
.tiny { font-size: 7px; fill: #78828b; }
.strong { fill: #d3d8dd; font-weight: 700; }
.crumb { fill: #1f75ad; }
.line { fill: none; stroke: #1c5f96; stroke-width: 3; }
.low { stroke: #0a3c78; }
.stamp {
  position: absolute;
  right: 17px;
  bottom: 8px;
  display: flex;
  align-items: center;
  gap: 7px;
  font-family: "Open Sans", sans-serif;
  font-size: 10px;
  line-height: 12px;
  color: #fff;
}

/* Floating controls */
.thumb { position: absolute; right: 4px; bottom: 37px; width: 2px; height: 24px; border-radius: 1px; background: #9a9a9a; }
.to-end {
  position: absolute;
  right: 18px;
  bottom: 18px;
  display: grid;
  place-items: center;
  width: 40px;
  height: 42px;
  border-radius: 6px;
  background: #292b2a;
  box-shadow: 0 2px 4px rgba(0, 0, 0, .25);
}
.to-end svg { width: 20px; height: 20px; fill: none; stroke: #fff; stroke-width: 1.2; }

.bottom { flex: none; height: 8px; border-top: 1px solid #1e1e1e; }
```
